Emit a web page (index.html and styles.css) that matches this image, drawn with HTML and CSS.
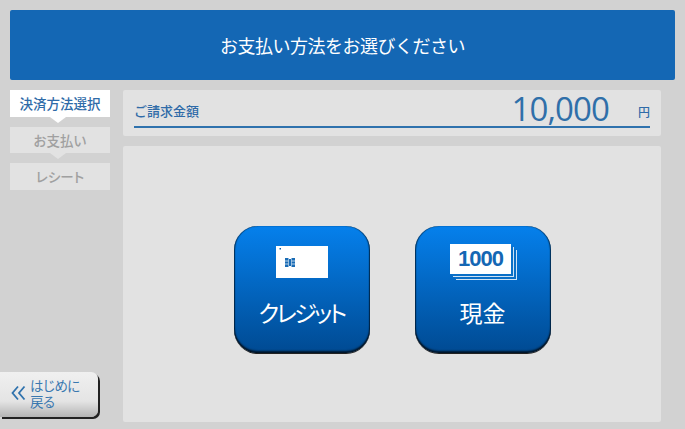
FILE: index.html
```html
<!DOCTYPE html>
<html lang="ja">
<head>
    <meta charset="UTF-8">
    <meta name="viewport" content="width=device-width, initial-scale=1.0">
    <title>お支払い方法をお選びください</title>
    <link rel="stylesheet" href="styles.css">
</head>
<body>
    <header class="title-bar">お支払い方法をお選びください</header>

    <div class="layout">
        <aside class="side">
            <ol class="steps">
                <li class="step current">決済方法選択</li>
                <li class="step">お支払い</li>
                <li class="step">レシート</li>
            </ol>
            <button class="back-btn">
                <svg class="back-icon" viewBox="0 0 15 16" width="15" height="16">
                    <path d="M7 1.500 1.500 8 7 14.500M13.500 1.500 8 8l5.500 6.500" fill="none" stroke="#2f72ad" stroke-width="1.800"/>
                </svg>
                <span class="back-text">はじめに<br>戻る</span>
            </button>
        </aside>

        <main class="main">
            <div class="amount-card">
                <div class="amount-row">
                    <span class="amount-label">ご請求金額</span>
                    <span class="amount-value">10,000</span>
                    <span class="amount-unit">円</span>
                </div>
            </div>

            <div class="pay-card">
                <button class="pay-btn">
                    <span class="pay-icon">
                        <svg viewBox="0 0 52 32" width="52" height="32">
                            <rect width="52" height="32" fill="#fff"/>
                            <rect x="3.500" y="2" width="1.500" height="1.500" fill="#0d5fa8"/>
                            <path d="M9 12h3.500v9H9zM15.500 12H19v9h-3.500zM13 13h2v7h-2z" fill="#1a6cb5"/>
                            <path d="M9 15h3.500M9 18h3.500M15.500 15H19M15.500 18H19" stroke="#fff" stroke-width=".7"/>
                        </svg>
                    </span>
                    <span class="pay-label kana">クレジット</span>
                </button>
                <button class="pay-btn">
                    <span class="pay-icon">
                        <span class="bill">1000</span>
                    </span>
                    <span class="pay-label">現金</span>
                </button>
            </div>
        </main>
    </div>
</body>
</html>
```

FILE: styles.css
```css
* {
    box-sizing: border-box;
}
html, body {
    margin: 0;
    height: 100%;
}
body {
    width: 685px;
    height: 429px;
    overflow: hidden;
    background-color: #d2d2d2;
    font-family: "Noto Sans CJK JP", "Liberation Sans", sans-serif;
    font-feature-settings: "palt";
    padding-top: 10px;
}
button {
    font-family: inherit;
    font-feature-settings: inherit;
    border: 0;
    padding: 0;
}
.title-bar {
    height: 70px;
    margin: 0 10px;
    background-color: #1467b4;
    border-radius: 2px;
    color: #fff;
    font-size: 18px;
    font-feature-settings: normal;
    letter-spacing: -0.5px;
    display: flex;
    align-items: center;
    justify-content: center;
}
.layout {
    display: flex;
    height: 342px;
    padding-top: 10px;
}
.side {
    width: 123px;
    flex: none;
    display: flex;
    flex-direction: column;
    justify-content: space-between;
}
.steps {
    list-style: none;
    margin: 0 0 0 10px;
    padding: 0;
    width: 100px;
    display: flex;
    flex-direction: column;
    gap: 10px;
}
.step {
    position: relative;
    height: 26.5px;
    background-color: #e2e2e2;
    color: #a0a0a0;
    font-size: 13.5px;
    font-weight: 500;
    display: flex;
    align-items: center;
    justify-content: center;
}
.step.current {
    background-color: #fff;
    color: #2f6ba8;
    font-feature-settings: normal;
}
.step.current::after,
.step:nth-child(2)::after {
    content: "";
    position: absolute;
    left: 40px;
    top: 26.5px;
    border-left: 8px solid transparent;
    border-right: 8px solid transparent;
    border-top: 6px solid #fff;
}
.step:nth-child(2)::after {
    border-top-color: #e2e2e2;
}
.back-btn {
    width: 98px;
    height: 45px;
    margin-bottom: 5px;
    display: flex;
    align-items: center;
    gap: 4px;
    padding: 0 0 3px 11px;
    background: linear-gradient(#f0f0f0, #e4e4e4 65%, #b4b4b4);
    border-radius: 0 7px 7px 0;
    box-shadow: 2px 2px 0 #222;
    color: #3a78b0;
    font-size: 13.5px;
    line-height: 16px;
    text-align: left;
}
.back-text {
    letter-spacing: -0.5px;
}
.back-icon {
    flex: none;
}
.main {
    width: 538px;
    display: flex;
    flex-direction: column;
    gap: 10px;
}
.amount-card {
    height: 46px;
    flex: none;
    background-color: #e2e2e2;
    border-radius: 2px;
    padding: 0 11px;
}
.amount-row {
    height: 38px;
    border-bottom: 2px solid #2f72ad;
    display: flex;
    align-items: center;
    color: #2f6ba8;
}
.amount-label {
    font-size: 13px;
    font-weight: 500;
    margin-top: 4px;
    font-feature-settings: normal;
}
.amount-value {
    margin-left: auto;
    font-family: "Open Sans", "Liberation Sans", sans-serif;
    font-size: 33px;
    line-height: 37px;
    color: #2f6fa9;
    letter-spacing: -0.9px;
}
.amount-unit {
    font-size: 12px;
    font-weight: 500;
    margin: 6px 0 0 29px;
}
.pay-card {
    height: 276px;
    flex: none;
    background-color: #e2e2e2;
    border-radius: 2px;
    display: flex;
    justify-content: center;
    align-items: flex-start;
    gap: 45px;
    padding: 80px 0 0 0;
}
.pay-btn {
    width: 136px;
    height: 127px;
    border-radius: 24px;
    background: linear-gradient(#0580ec, #004a92);
    box-shadow: inset 0 -2px 2px rgba(0,0,0,0.7), inset 1px 0 1px rgba(0,0,0,0.5), inset -1px 0 1px rgba(0,0,0,0.5), 0 1px 0 #222;
    color: #fff;
    display: flex;
    flex-direction: column;
    align-items: center;
}
.pay-icon {
    height: 64px;
    padding-top: 20px;
    display: flex;
    align-items: flex-start;
    justify-content: center;
}
.pay-label {
    margin-top: 5px;
    font-size: 23px;
    line-height: 34px;
}
.pay-label.kana {
    letter-spacing: -2.6px;
}
.bill {
    margin: -2px 4px 0 0;
    width: 61px;
    height: 30px;
    background-color: #fff;
    color: #1467b4;
    font-family: "Liberation Sans", sans-serif;
    font-size: 22px;
    font-weight: bold;
    letter-spacing: -1px;
    line-height: 30px;
    text-align: center;
    box-shadow: 2px 2px 0 #0a6fc7, 3px 3px 0 #cfe3f5, 5px 5px 0 #0a6fc7, 6px 6px 0 #cfe3f5;
}
```
